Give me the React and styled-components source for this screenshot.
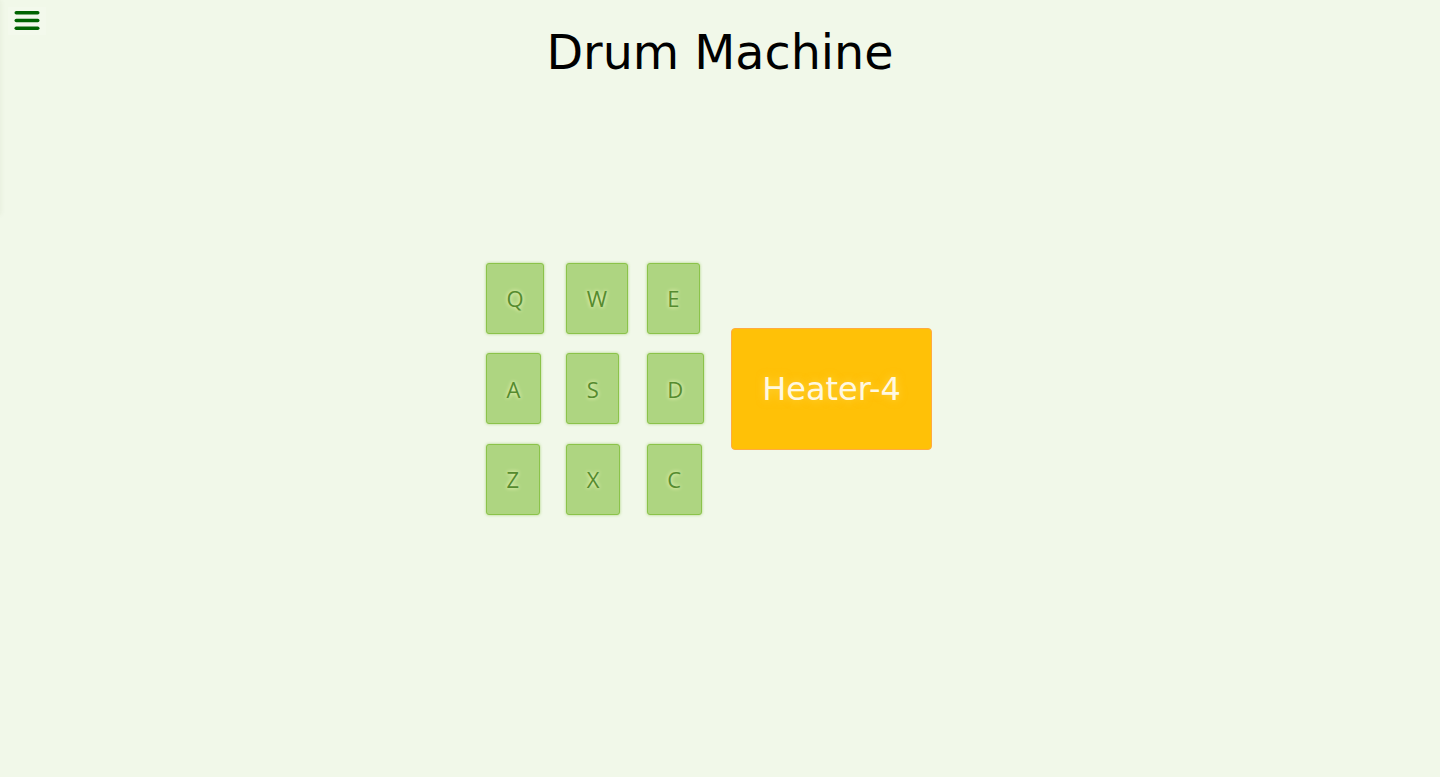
import React from "react";
import styled, { createGlobalStyle } from "styled-components";

const Global = createGlobalStyle`
  html, body { margin: 0; padding: 0; }
  body {
    background: #f1f8e9;
    font-family: "DejaVu Sans", sans-serif;
    overflow: hidden;
  }
  * { box-sizing: border-box; }
`;

const Page = styled.div`
  min-height: 100vh;
  display: grid;
  grid-template-rows: 104px 1fr 104px;
  position: relative;
`;

const Drawer = styled.nav`
  position: absolute;
  left: 0;
  top: 0;
  width: 240px;
  height: 215px;
  transform: translateX(-100%);
  background: #f1f8e9;
  box-shadow: 1px 0 5px rgba(60, 90, 30, 0.06);
`;

const Header = styled.header`
  display: grid;
  grid-template-columns: 1fr auto 1fr;
  align-items: center;
`;

const MenuButton = styled.button`
  align-self: start;
  justify-self: start;
  margin: 7px 0 0 8px;
  width: 38px;
  height: 28px;
  padding: 0;
  border: none;
  background: rgba(255, 255, 255, 0.15);
  display: flex;
  align-items: center;
  justify-content: center;
  cursor: pointer;
`;

const Title = styled.h1`
  margin: 0;
  font-family: "DejaVu Sans", sans-serif;
  font-weight: normal;
  font-size: 47.6px;
  color: #000;
  text-align: center;
`;

const Main = styled.main`
  display: flex;
  align-items: center;
  justify-content: center;
  padding-right: 22px;
`;

const Machine = styled.div`
  display: flex;
  align-items: center;
  gap: 4px;
`;

const PadGrid = styled.div`
  width: 241px;
  display: grid;
  grid-template-columns: repeat(3, 1fr);
  grid-auto-rows: 71px;
  row-gap: 19.5px;
  justify-items: start;
`;

const Pad = styled.button`
  height: 71px;
  padding: 0 19.5px;
  background: #aed581;
  border: 1px solid #8bc34a;
  border-radius: 3px;
  box-shadow: 0 0 3px rgba(139, 195, 74, 0.7);
  font-family: "Open Sans", sans-serif;
  font-size: 22px;
  color: #558b2f;
  text-shadow: 0 0 4px rgba(255, 255, 200, 1);
  display: flex;
  align-items: center;
  justify-content: center;
  cursor: pointer;
`;

const Display = styled.div`
  width: 201px;
  height: 122px;
  background: #ffc107;
  border: 1px solid #ffab40;
  border-radius: 4px;
  display: flex;
  align-items: center;
  justify-content: center;
  font-family: "DejaVu Sans", sans-serif;
  font-size: 32px;
  color: #fff8e1;
  text-shadow: 0 0 8px rgba(255, 235, 130, 0.5);
`;

const Bars = () => (
  <svg width="26" height="20" viewBox="0 0 26 20">
    <rect x="0.5" y="0" width="25" height="3.5" rx="1.75" fill="#006400" />
    <rect x="0.5" y="7.7" width="25" height="3.5" rx="1.75" fill="#006400" />
    <rect x="0.5" y="15.5" width="25" height="3.5" rx="1.75" fill="#006400" />
  </svg>
);

const keys = ["Q", "W", "E", "A", "S", "D", "Z", "X", "C"];

export default function App() {
  return (
    <>
      <Global />
      <Page>
        <Drawer />
        <Header>
          <MenuButton aria-label="menu">
            <Bars />
          </MenuButton>
          <Title>Drum Machine</Title>
          <div />
        </Header>
        <Main>
          <Machine id="drum-machine">
            <PadGrid>
              {keys.map((k) => (
                <Pad key={k} className="drum-pad">
                  {k}
                </Pad>
              ))}
            </PadGrid>
            <Display id="display">Heater-4</Display>
          </Machine>
        </Main>
        <div />
      </Page>
    </>
  );
}
